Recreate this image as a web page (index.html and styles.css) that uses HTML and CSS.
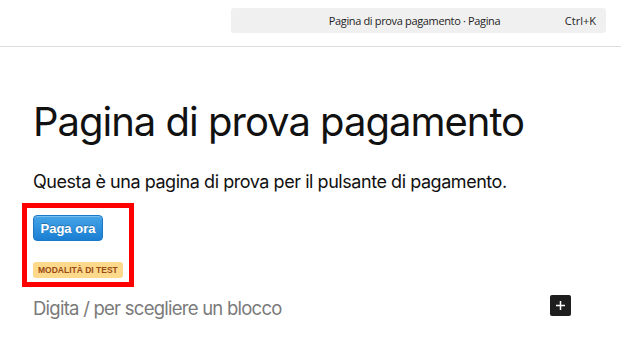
FILE: index.html
```html
<!DOCTYPE html>
<html lang="it">

<head>
    <meta charset="UTF-8">
    <meta name="viewport" content="width=device-width, initial-scale=1.0">
    <title>Pagina di prova pagamento</title>
    <link rel="stylesheet" href="styles.css">
</head>

<body>
    <header class="topbar">
        <div class="command-bar">
            <span class="command-title">Pagina di prova pagamento · Pagina</span>
            <span class="command-key">Ctrl+K</span>
        </div>
    </header>

    <main class="editor">
        <h1 class="page-title">Pagina di prova pagamento</h1>
        <p class="page-text">Questa è una pagina di prova per il pulsante di pagamento.</p>

        <div class="highlight">
            <button class="pay-button">Paga ora</button>
            <div class="test-badge">Modalità di test</div>
        </div>

        <div class="block-row">
            <span class="block-placeholder">Digita / per scegliere un blocco</span>
            <button class="block-add" aria-label="Aggiungi blocco">
                <svg width="11" height="11" viewBox="0 0 11 11">
                    <path d="M5.5 1v9M1 5.5h9" stroke="#fff" stroke-width="1.5" fill="none" />
                </svg>
            </button>
        </div>
    </main>
</body>

</html>
```

FILE: styles.css
```css
body {
    margin: 0;
    background-color: #fff;
    color: #1e1e1e;
    font-family: Inter, "Noto Sans", sans-serif;
}

.topbar {
    display: flex;
    justify-content: flex-end;
    align-items: flex-start;
    height: 46px;
    border-bottom: 1px solid #dcdcdc;
}

.command-bar {
    position: relative;
    display: flex;
    justify-content: center;
    align-items: center;
    width: 375px;
    height: 25px;
    margin-top: 8px;
    margin-right: 15px;
    padding-right: 8px;
    box-sizing: border-box;
    background-color: #f0f0f0;
    border-radius: 3px;
    font-family: "Open Sans", "Noto Sans", sans-serif;
    font-size: 11px;
    color: #1e1e1e;
}

.command-title {
    letter-spacing: -0.35px;
}

.command-key {
    position: absolute;
    right: 10px;
}

.editor {
    padding: 0 50px 0 33px;
}

.page-title {
    margin: 51px 0 0;
    font-size: 40px;
    line-height: 48px;
    font-weight: 400;
    letter-spacing: -1px;
    color: #111;
}

.page-text {
    margin: 22px 0 0;
    font-size: 18px;
    line-height: 27px;
    letter-spacing: -0.45px;
    color: #111;
}

.highlight {
    display: flex;
    flex-direction: column;
    align-items: flex-start;
    gap: 21px;
    width: 90px;
    margin: 8px 0 0 -11px;
    padding: 7px 6px 4px 6px;
    border: 5px solid #ff0000;
}

.pay-button {
    width: 70px;
    height: 26px;
    padding: 0;
    border: 1px solid #1a78c8;
    border-radius: 4px;
    background: linear-gradient(#45a5e8, #1a7ed2);
    box-shadow: inset 0 1px 0 rgba(255, 255, 255, 0.3);
    color: #fff;
    font-family: "Liberation Sans", Arial, sans-serif;
    font-size: 13px;
    font-weight: bold;
    text-shadow: 0 -1px 0 rgba(0, 0, 0, 0.25);
}

.test-badge {
    padding: 0 5px;
    height: 16px;
    line-height: 16px;
    background-color: #fdd98c;
    border-radius: 3px;
    color: #9a4a12;
    font-family: "Liberation Sans", Arial, sans-serif;
    font-size: 8.5px;
    font-weight: bold;
    text-transform: uppercase;
}

.block-row {
    display: flex;
    justify-content: space-between;
    align-items: flex-start;
    margin-top: 6px;
    height: 30px;
}

.block-placeholder {
    font-size: 18.5px;
    line-height: 30px;
    letter-spacing: -0.75px;
    color: #7a7a7a;
}

.block-add {
    display: flex;
    justify-content: center;
    align-items: center;
    width: 21px;
    height: 21px;
    margin-top: 2px;
    padding: 0;
    border: none;
    border-radius: 2px;
    background-color: #1e1e1e;
}
```
